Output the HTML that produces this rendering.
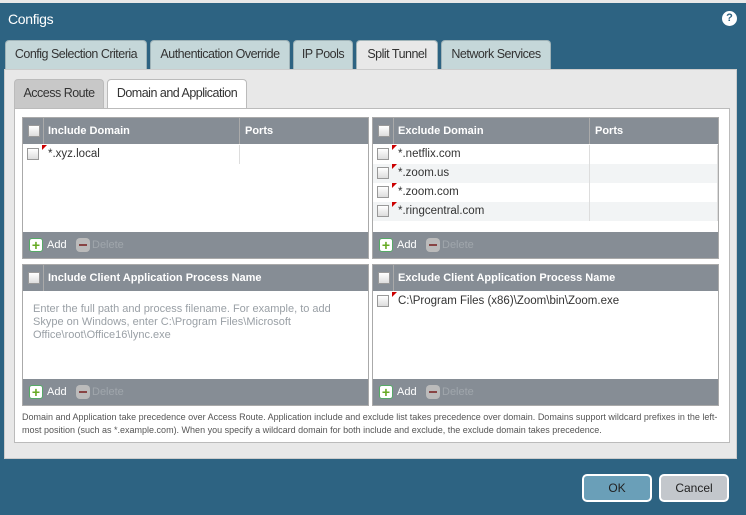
<!DOCTYPE html>
<html><head><style>
*{box-sizing:border-box;margin:0;padding:0}
body{width:746px;height:515px;background:#2d6382;font-family:"Liberation Sans",sans-serif;position:relative;overflow:hidden}
.a{position:absolute}
.tab{position:absolute;top:40px;height:29px;background:#c5d7d9;border:1px solid #9fb3b8;border-bottom:none;border-radius:4px 4px 0 0;font-size:12.5px;letter-spacing:-0.5px;white-space:nowrap;color:#333;text-align:center;line-height:27px}
.st{position:absolute;top:79px;height:29px;border:1px solid #bbb;border-bottom:none;border-radius:4px 4px 0 0;font-size:12.5px;letter-spacing:-0.5px;white-space:nowrap;color:#333;text-align:center;line-height:27px}
.grid{position:absolute;background:#fff;border:1px solid #aaa}
.hd{position:absolute;left:0;right:0;top:0;height:26px;background:#868d95;color:#fff;font-size:11px;font-weight:bold;line-height:26px}
.ft{position:absolute;left:0;right:0;bottom:0;height:26px;background:#868d95;font-size:11px;color:#fff;line-height:26px}
.cb{position:absolute;width:12px;height:12px;border:1px solid #999;background:linear-gradient(#fff,#ddd)}
.row{position:absolute;left:0;right:0;height:19px;font-size:11.5px;color:#333;line-height:19px}
.row .cb{left:4px;top:3px}
.row .t{position:absolute;left:25px}
.row .t:before{content:"";position:absolute;left:-6px;top:0;border-top:5px solid #c00;border-right:5px solid transparent}
.add{position:absolute;left:6px;top:6px;width:14px;height:14px;background:#fff;border-radius:3px;border:1px solid #5a6}
.add:after{content:"+";position:absolute;left:0;top:-7px;width:12px;text-align:center;color:#6a2;font-weight:bold;font-size:14px}
.del{position:absolute;left:53px;top:6px;width:14px;height:14px;background:#bbb;border-radius:4px}
.del:after{content:"";position:absolute;left:3px;top:6px;width:8px;height:2px;background:#844}
.btn{position:absolute;top:474px;height:28px;width:70px;border:2px solid #fff;border-radius:5px;font-size:12px;text-align:center;line-height:24px;color:#222}
</style></head><body>
<div class="a" style="left:0;top:0;width:746px;height:3px;background:#e8e8e8"></div>
<div class="a" style="left:8px;top:11px;color:#fff;font-size:14px;letter-spacing:-0.3px">Configs</div>
<div class="a" style="left:722px;top:11px;width:15px;height:15px;border-radius:50%;background:#fff;color:#2d6382;font-size:11px;font-weight:bold;text-align:center;line-height:15px">?</div>
<div class="tab" style="left:5px;width:142px">Config Selection Criteria</div>
<div class="tab" style="left:150px;width:140px">Authentication Override</div>
<div class="tab" style="left:293px;width:60px">IP Pools</div>
<div class="tab" style="left:356px;width:82px;background:#e8e8e8;height:30px">Split Tunnel</div>
<div class="tab" style="left:441px;width:110px">Network Services</div>
<div class="a" style="left:4px;top:69px;width:733px;height:390px;background:#e8e8e8;border:1px solid #ccc"></div>
<div class="st" style="left:14px;width:90px;background:#c8c8c8">Access Route</div>
<div class="st" style="left:107px;width:140px;background:#fff;height:30px">Domain and Application</div>
<div class="a" style="left:14px;top:108px;width:716px;height:335px;background:#fff;border:1px solid #bbb"></div>

<div class="grid" style="left:22px;top:117px;width:347px;height:142px">
<div class="hd"><div class="cb" style="left:5px;top:7px"></div><span style="position:absolute;left:20px;top:0;bottom:0;border-left:1px solid #aaa"></span><span style="position:absolute;left:25px">Include Domain</span><span style="position:absolute;left:216px;top:0;bottom:0;border-left:1px solid #aaa"></span><span style="position:absolute;left:222px">Ports</span></div>
<div class="row" style="top:27px"><div class="cb"></div><span class="t">*.xyz.local</span><span style="position:absolute;left:216px;top:0;bottom:0;border-left:1px solid #ddd"></span></div>
<div class="ft"><div class="add"></div><span style="position:absolute;left:24px">Add</span><div class="del"></div><span style="position:absolute;left:69px;color:#a0a6ac">Delete</span></div>
</div>

<div class="grid" style="left:372px;top:117px;width:347px;height:142px">
<div class="hd"><div class="cb" style="left:5px;top:7px"></div><span style="position:absolute;left:20px;top:0;bottom:0;border-left:1px solid #aaa"></span><span style="position:absolute;left:25px">Exclude Domain</span><span style="position:absolute;left:216px;top:0;bottom:0;border-left:1px solid #aaa"></span><span style="position:absolute;left:222px">Ports</span></div>
<div class="row" style="top:27px"><div class="cb"></div><span class="t">*.netflix.com</span></div>
<div class="row" style="top:46px;background:#f2f4f5"><div class="cb"></div><span class="t">*.zoom.us</span></div>
<div class="row" style="top:65px"><div class="cb"></div><span class="t">*.zoom.com</span></div>
<div class="row" style="top:84px;background:#f2f4f5"><div class="cb"></div><span class="t">*.ringcentral.com</span></div>
<span style="position:absolute;left:216px;top:27px;height:76px;border-left:1px solid #ddd"></span>
<span style="position:absolute;left:344px;top:27px;height:76px;border-left:1px solid #ddd"></span>
<div class="ft"><div class="add"></div><span style="position:absolute;left:24px">Add</span><div class="del"></div><span style="position:absolute;left:69px;color:#a0a6ac">Delete</span></div>
</div>

<div class="grid" style="left:22px;top:264px;width:347px;height:142px">
<div class="hd"><div class="cb" style="left:5px;top:7px"></div><span style="position:absolute;left:20px;top:0;bottom:0;border-left:1px solid #aaa"></span><span style="position:absolute;left:25px">Include Client Application Process Name</span></div>
<div class="a" style="left:10px;top:38px;width:310px;font-size:11px;line-height:13px;color:#9aa0a6">Enter the full path and process filename. For example, to add Skype on Windows, enter C:\Program Files\Microsoft Office\root\Office16\lync.exe</div>
<div class="ft"><div class="add"></div><span style="position:absolute;left:24px">Add</span><div class="del"></div><span style="position:absolute;left:69px;color:#a0a6ac">Delete</span></div>
</div>

<div class="grid" style="left:372px;top:264px;width:347px;height:142px">
<div class="hd"><div class="cb" style="left:5px;top:7px"></div><span style="position:absolute;left:20px;top:0;bottom:0;border-left:1px solid #aaa"></span><span style="position:absolute;left:25px">Exclude Client Application Process Name</span></div>
<div class="row" style="top:27px"><div class="cb"></div><span class="t">C:\Program Files (x86)\Zoom\bin\Zoom.exe</span></div>
<div class="ft"><div class="add"></div><span style="position:absolute;left:24px">Add</span><div class="del"></div><span style="position:absolute;left:69px;color:#a0a6ac">Delete</span></div>
</div>

<div class="a" style="left:22px;top:411px;width:700px;font-size:9px;line-height:13px;color:#555">Domain and Application take precedence over Access Route. Application include and exclude list takes precedence over domain. Domains support wildcard prefixes in the left-most position (such as *.example.com). When you specify a wildcard domain for both include and exclude, the exclude domain takes precedence.</div>

<div class="btn" style="left:582px;background:#6a9fb8">OK</div>
<div class="btn" style="left:659px;background:#c3c7cc">Cancel</div>
</body></html>
